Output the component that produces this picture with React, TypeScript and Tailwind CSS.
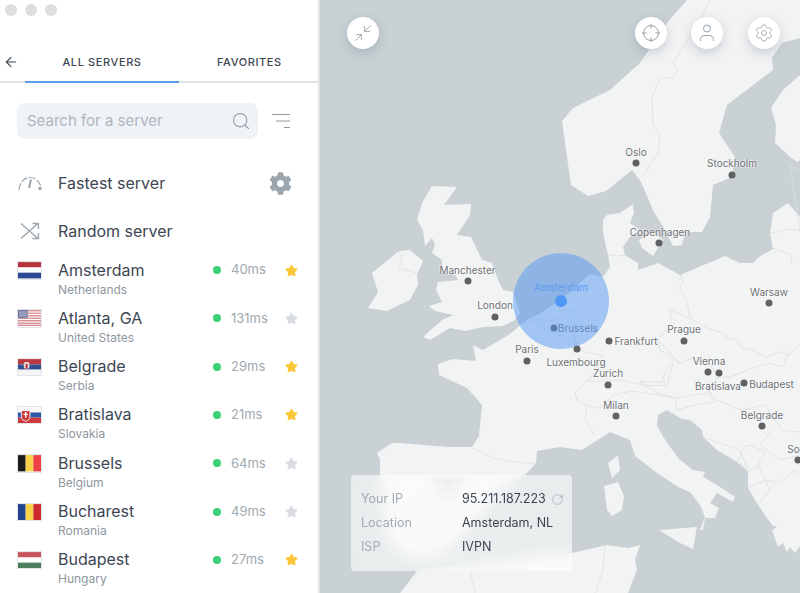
import React from "react";
import { ArrowLeft, Search, RotateCw, Settings, Minimize2 } from "lucide-react";
import { FaCog, FaStar } from "react-icons/fa";

const Flag = ({ code }: { code: string }) => {
  const body: Record<string, React.ReactNode> = {
    nl: (<><rect width="24" height="5.6" fill="#b5323c" /><rect y="5.6" width="24" height="5.4" fill="#fff" /><rect y="11" width="24" height="6" fill="#2b4a94" /></>),
    us: (<>
      <rect width="24" height="17" fill="#fff" />
      {[0, 2.6, 5.2, 7.8, 10.4, 13, 15.2].map((y) => <rect key={y} y={y} width="24" height="1.4" fill="#d98a8f" />)}
      <rect width="10" height="8" fill="#68709f" />
      <rect x="1" y="1.5" width="8" height="1" fill="#c5c9dc" /><rect x="1" y="3.5" width="8" height="1" fill="#c5c9dc" /><rect x="1" y="5.5" width="8" height="1" fill="#c5c9dc" />
    </>),
    rs: (<><rect width="24" height="5.6" fill="#bb3a42" /><rect y="5.6" width="24" height="5.4" fill="#2f4f8f" /><rect y="11" width="24" height="6" fill="#f6f6f6" /><rect x="6" y="3" width="6" height="7" rx="2" fill="#f1d9d6" /><rect x="8" y="5" width="2" height="5" fill="#b5323c" /></>),
    sk: (<><rect width="24" height="5.6" fill="#f8f8f8" /><rect y="5.6" width="24" height="5.4" fill="#2f59a8" /><rect y="11" width="24" height="6" fill="#cf3a3f" /><path d="M3.5 3.5h9v7c0 2.5-2.5 3.5-4.5 4.5-2-1-4.500-2-4.500-4.500z" fill="#cf3a3f" stroke="#fff" strokeWidth="0.9" /><rect x="7.300" y="5" width="1.500" height="6" fill="#fff" /><rect x="5.800" y="7" width="4.500" height="1.200" fill="#fff" /></>),
    be: (<><rect width="8" height="17" fill="#1c1c1c" /><rect x="8" width="8" height="17" fill="#f8d347" /><rect x="16" width="8" height="17" fill="#ee3f45" /></>),
    ro: (<><rect width="8" height="17" fill="#24438f" /><rect x="8" width="8" height="17" fill="#f8d347" /><rect x="16" width="8" height="17" fill="#cd2a30" /></>),
    hu: (<><rect width="24" height="5.6" fill="#c9535a" /><rect y="5.6" width="24" height="5.4" fill="#fff" /><rect y="11" width="24" height="6" fill="#4d7f5d" /></>),
  };
  return (
    <svg width="23" height="16.500" viewBox="0 0 24 17" className="block shrink-0 outline outline-1 outline-[#e3e6e9]">
      {body[code]}
    </svg>
  );
};

const servers = [
  { city: "Amsterdam", country: "Netherlands", ms: "40ms", fav: true, flag: "nl" },
  { city: "Atlanta, GA", country: "United States", ms: "131ms", fav: false, flag: "us" },
  { city: "Belgrade", country: "Serbia", ms: "29ms", fav: true, flag: "rs" },
  { city: "Bratislava", country: "Slovakia", ms: "21ms", fav: true, flag: "sk" },
  { city: "Brussels", country: "Belgium", ms: "64ms", fav: false, flag: "be" },
  { city: "Bucharest", country: "Romania", ms: "49ms", fav: false, flag: "ro" },
  { city: "Budapest", country: "Hungary", ms: "27ms", fav: true, flag: "hu" },
];

const continent =
  "283,277 290,267 288,255 305,255 318,263 318,270 338,263 360,275 405,256 420,263 433,263 440,256 453,249 450,233 453,213 468,203 480,217 480,546 475,553 470,547 467,552 463,543 458,547 452,530 457,527 452,525 447,518 438,505 428,488 428,472 417,462 397,450 383,437 382,430 370,420 362,419 355,415 347,410 338,415 337,426 347,443 360,460 373,470 385,472 383,477 397,485 415,497 413,502 397,493 390,503 399,508 395,518 385,518 383,530 380,530 385,517 380,505 370,492 360,488 337,473 315,456 310,440 290,432 262,450 240,447 217,451 216,463 205,475 180,490 170,505 150,525 135,545 110,560 85,555 68,540 64,520 60,475 60,460 57,453 72,443 80,443 128,447 152,447 159,436 162,405 147,388 119,375 118,364 133,359 156,361 153,345 163,350 187,336 197,328 207,320 223,312 250,292 270,274";

const land = [
  "367,0 347,23 320,63 290,90 253,108 242,121 247,157 251,185 268,196 286,191 312,170 321,182 333,210 345,230 353,246 362,245 365,232 382,232 390,217 393,185 412,177 415,157 399,133 407,105 453,70 452,58 462,43 480,38 480,0",
  "480,75 463,90 451,108 456,125 455,143 470,157 477,162 480,160",
  "283,220 287,215 300,213 313,204 314,213 310,223 320,230 310,237 303,247 305,255 297,256 288,255 283,233",
  "319,240 333,232 343,240 333,256 322,248",
  "112,186 137,187 124,205 151,204 150,215 137,235 151,237 162,260 172,263 178,280 183,290 193,292 200,313 195,320 183,326 163,327 145,331 130,328 110,340 103,337 122,320 133,315 115,311 109,306 122,302 116,290 118,282 138,280 135,275 122,272 122,260 112,253 115,245 112,238 105,246 103,230 97,220 102,203",
  "79,251 90,250 103,261 97,275 98,285 90,300 67,311 48,308 58,292 52,273",
  "339,530 377,527 373,549 360,543",
  "288,463 298,455 300,470 292,478",
  "284,486 298,482 304,496 302,510 292,516 287,510",
  "80,593 97,571 130,566 170,562 215,556 252,553 287,545 308,548 320,545 315,560 317,570 308,593",
];

const borders = [
  "390,0 382,17 353,63 357,70 353,78 340,78 332,97 333,125 340,135 338,153 322,177",
  "79,251 82,260 79,268 97,273",
  "360,275 363,283 360,288 367,302 370,318 382,325 387,328 403,333 407,338 417,340 422,348 433,350 447,357 458,352 468,355 480,345",
  "338,340 340,350 360,363 375,357 387,360 398,377 410,377 435,367 450,363 463,367 468,355",
  "388,390 397,400 420,410 445,405 450,413 462,430 480,432",
  "320,382 337,393 355,398 387,393 398,377",
  "353,360 343,377 345,382 320,382",
  "360,363 338,340 352,322 350,310 370,318",
  "210,320 227,330 253,340 257,350 283,356 282,365 267,381 255,393 257,400 267,406 265,420 275,436",
  "210,320 233,320 253,310 262,300 270,283",
  "253,310 255,325 255,340 257,350",
  "267,381 287,381 302,380 312,383 333,386 347,385 353,363",
  "267,406 280,408 293,395 312,391 355,398 357,410 375,405 395,402 388,390",
  "153,448 173,458 200,463 216,463",
  "288,255 297,256 305,255",
  "451,233 470,229 480,230",
  "453,248 471,255 472,264",
  "383,437 405,445 420,450 425,462 428,472",
  "425,446 418,460 428,472 438,465 445,452 430,445 425,446",
  "438,465 445,480 460,482 475,470 480,475",
  "428,488 445,480 450,490 438,505",
  "452,430 440,445 460,460 480,455",
  "150,571 155,593",
  "285,545 283,570 275,593",
  "480,232 470,165 480,170",
];

const cities = [
  { n: "Oslo", lx: 636, ly: 152, dx: 636, dy: 163 },
  { n: "Stockholm", lx: 732, ly: 163, dx: 731.5, dy: 174.5 },
  { n: "Copenhagen", lx: 660, ly: 231.5, dx: 659, dy: 243 },
  { n: "Manchester", lx: 467.5, ly: 269.5, dx: 468, dy: 281 },
  { n: "Warsaw", lx: 769, ly: 292, dx: 769, dy: 303 },
  { n: "London", lx: 495, ly: 305, dx: 495, dy: 316.5 },
  { n: "Brussels", lx: 578, ly: 328, dx: 553.5, dy: 327.5 },
  { n: "Frankfurt", lx: 636, ly: 341, dx: 609, dy: 340.5 },
  { n: "Prague", lx: 684, ly: 329, dx: 684, dy: 340.5 },
  { n: "Paris", lx: 527, ly: 349, dx: 527, dy: 360.5 },
  { n: "Luxembourg", lx: 576, ly: 361.5, dx: 576.5, dy: 349 },
  { n: "Vienna", lx: 709, ly: 360.5, dx: 708, dy: 372 },
  { n: "Bratislava", lx: 718, ly: 386, dx: 718.5, dy: 372.5 },
  { n: "Budapest", lx: 771.5, ly: 384, dx: 743.5, dy: 383 },
  { n: "Zurich", lx: 608, ly: 373, dx: 608, dy: 385 },
  { n: "Milan", lx: 616, ly: 404.5, dx: 616, dy: 416 },
  { n: "Belgrade", lx: 762, ly: 415, dx: 762, dy: 426 },
  { n: "So", lx: 793.5, ly: 449, dx: 798, dy: 460 },
];

const MapButton = ({ className, children }: { className: string; children: React.ReactNode }) => (
  <div className={`absolute top-[17px] flex h-8 w-8 items-center justify-center rounded-full bg-white shadow-[0_4px_12px_rgba(90,105,130,0.28)] ${className}`}>
    {children}
  </div>
);

export default function App() {
  return (
    <div className="flex h-[593px] w-[800px] overflow-hidden bg-white font-['Inter',sans-serif] text-[#3d4653]">
      <aside className="flex h-full w-[320px] shrink-0 flex-col overflow-hidden border-r-2 border-[#e0e4e7]">
        <div className="flex h-5 shrink-0 items-center gap-2 pl-[5px]">
          <span className="h-3 w-3 rounded-full bg-[#dedede]" />
          <span className="h-3 w-3 rounded-full bg-[#dedede]" />
          <span className="h-3 w-3 rounded-full bg-[#dedede]" />
        </div>
        <div className="flex h-[63px] shrink-0 border-b-2 border-[#e0e5e8] pt-[26px]">
          <ArrowLeft size={16} strokeWidth={1.6} className="ml-[3px] mt-[8px] w-[16px] shrink-0 text-[#3d4653]" />
          <div className="relative -mb-[2px] ml-[6px] w-[154px] border-b-2 border-[#5b9bec] pt-[8px] text-center text-[11px] font-medium tracking-[0.055em]">
            ALL SERVERS
          </div>
          <div className="ml-[38px] pt-[8px] text-[11px] font-medium tracking-[0.055em]">FAVORITES</div>
        </div>

        <div className="flex shrink-0 items-center pl-[17px] pt-[20px]">
          <div className="flex h-9 w-[241px] items-center justify-between rounded-lg bg-[#eff3f7] pl-[10px] pr-[7px] text-[15px] text-[#adb6be]">
            <span>Search for a server</span>
            <Search size={20} strokeWidth={1.3} className="text-[#8f9aa3]" />
          </div>
          <svg width="20" height="16" viewBox="0 0 20 16" className="ml-[13px] text-[#8f9aa3]" stroke="currentColor" strokeWidth="1.2">
            <path d="M1 1.500h18M5 8h14M13 14.500h6" />
          </svg>
        </div>

        <div className="mt-[20px] flex h-[48px] shrink-0 items-center pl-[18px] pr-[26px]">
          <svg width="24" height="16" viewBox="0 0 24 16" fill="none" stroke="#9aa5ad" strokeWidth="1.200" className="w-10 shrink-0 pr-4">
            <path d="M1 15C1.500 8 6 2.500 12 2.500S21.500 7 23 12" strokeDasharray="7 1.500" />
            <path d="M13 4.500 11 13" strokeWidth="2" />
            <rect x="20.500" y="12" width="3" height="3" fill="#9aa5ad" stroke="none" />
          </svg>
          <span className="flex-1 text-[16px] leading-none">Fastest server</span>
          <FaCog size={23} className="text-[#9aa5ad]" />
        </div>
        <div className="flex h-[48px] shrink-0 items-center pl-[20px]">
          <svg width="20" height="18" viewBox="0 0 20 18" fill="none" stroke="#9aa5ad" strokeWidth="1.300" className="mr-[18px] shrink-0">
            <path d="M1 1.500 18 16.500M1 16.500 18 1.500M12.500 1.500H18.500V7M12.500 16.500H18.500V11" />
          </svg>
          <span className="text-[16px] leading-none">Random server</span>
        </div>

        <div className="flex shrink-0 flex-col pt-[4.500px]">
          {servers.map((s) => (
            <div key={s.city} className="flex h-[48.33px] shrink-0 pl-[18px]">
              <div className="w-10 shrink-0 pt-[2.500px]"><Flag code={s.flag} /></div>
              <div className="w-[155px] shrink-0">
                <div className="text-[16px] leading-[20px]">{s.city}</div>
                <div className="mt-[2px] text-[12px] leading-[16px] text-[#8e979f]">{s.country}</div>
              </div>
              <div className="flex h-5 items-center pt-[1px]">
                <span className="h-2 w-2 rounded-full bg-[#3ccf75]" />
                <span className="ml-[10px] w-[54px] text-[13px] text-[#a0a9b1]">{s.ms}</span>
                <FaStar size={13} className={s.fav ? "text-[#fbc637]" : "text-[#d9dde2]"} />
              </div>
            </div>
          ))}
        </div>
      </aside>

      <main className="relative h-full w-[480px] overflow-hidden bg-[#c9d1d4]">
        <svg width="480" height="593" viewBox="0 0 480 593" className="absolute inset-0 block">
          <polygon points={continent} fill="#f2f3f3" />
          {land.map((p) => <polygon key={p} points={p} fill="#f2f3f3" />)}
          {borders.map((p) => <polyline key={p} points={p} fill="none" stroke="#dcdfe1" strokeWidth="0.8" />)}
          <circle cx="128" cy="490" r="4" fill="#8a8f92" />
          <rect x="113" y="479" width="30" height="6" fill="#c5c9cc" />
        </svg>

        {cities.map((c) => (
          <React.Fragment key={c.n}>
            <span className="absolute h-[7px] w-[7px] -translate-x-1/2 -translate-y-1/2 rounded-full bg-[#5f6163]" style={{ left: c.dx - 320, top: c.dy }} />
            <span className="absolute -translate-x-1/2 -translate-y-1/2 whitespace-nowrap text-[10px] leading-none text-[#6e7174] [text-shadow:0_0_2px_#fff,0_0_2px_#fff]" style={{ left: c.lx - 320, top: c.ly }}>
              {c.n}
            </span>
          </React.Fragment>
        ))}

        <div className="absolute left-[193px] top-[253px] h-24 w-24 rounded-full bg-[#5298f6]/50" />
        <span className="absolute left-[241px] top-[287px] -translate-x-1/2 -translate-y-1/2 whitespace-nowrap text-[10px] leading-none text-[#5b9cf2]">Amsterdam</span>
        <span className="absolute left-[235px] top-[295px] h-3 w-3 rounded-full bg-[#4f97f5]" />

        <MapButton className="left-[27px]"><Minimize2 size={20} strokeWidth={1} className="text-[#8f9aa3]" /></MapButton>
        <MapButton className="left-[315px]">
          <svg width="18" height="18" viewBox="0 0 18 18" fill="none" stroke="#98a2aa" strokeWidth="1">
            <circle cx="9" cy="9" r="7.500" />
            <path d="M9 0v4.500M9 13.500V18M0 9h4.500M13.500 9H18" />
          </svg>
        </MapButton>
        <MapButton className="left-[371px]">
          <svg width="16" height="18" viewBox="0 0 16 18" fill="none" stroke="#98a2aa" strokeWidth="1">
            <circle cx="8" cy="4.500" r="3.500" />
            <path d="M1.500 17v-1.500C1.500 13 3.500 11.500 6 11.500h4c2.500 0 4.500 1.500 4.500 4V17" />
          </svg>
        </MapButton>
        <MapButton className="left-[428px]"><Settings size={20} strokeWidth={1} className="text-[#98a2aa]" /></MapButton>

        <div className="absolute left-[31px] top-[475px] h-[96px] w-[221px] rounded bg-white/60 pl-[10px] pt-[12px] text-[12.500px] backdrop-blur-[8px]">
          <div className="flex h-6 items-center">
            <span className="w-[101px] text-[#a3abb3]">Your IP</span>
            <span>95.211.187.223</span>
            <RotateCw size={13} strokeWidth={1.2} className="ml-[5px] text-[#98a2aa]" />
          </div>
          <div className="flex h-6 items-center">
            <span className="w-[101px] text-[#a3abb3]">Location</span>
            <span>Amsterdam, NL</span>
          </div>
          <div className="flex h-6 items-center">
            <span className="w-[101px] text-[#a3abb3]">ISP</span>
            <span>IVPN</span>
          </div>
        </div>
      </main>
    </div>
  );
}
